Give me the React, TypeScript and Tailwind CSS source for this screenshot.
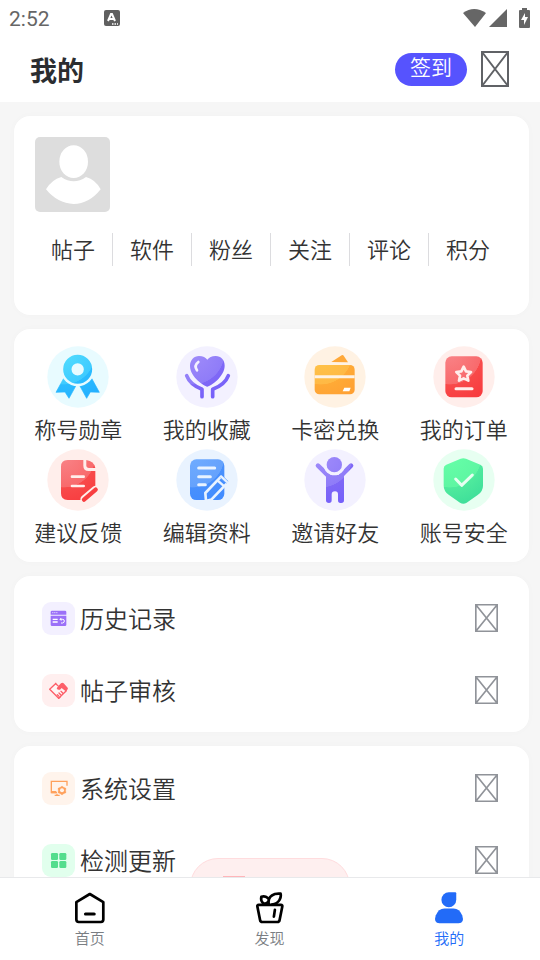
import { useState, type ReactNode } from "react";

type Tone = "cyan" | "purple" | "orange" | "red" | "blue" | "green";

const tones: Record<Tone, { bg: string; stops: [string, string, string, string] }> = {
  cyan: { bg: "#e8fbff", stops: ["#52defe", "#3fcbff", "#2bbcff", "#24b0ff"] },
  purple: { bg: "#f3f1ff", stops: ["#a08cfa", "#8f7cf8", "#7f68f6", "#7560fa"] },
  orange: { bg: "#fff2e3", stops: ["#ffc648", "#ffb945", "#ffaa36", "#ffa033"] },
  red: { bg: "#ffeeeb", stops: ["#f98488", "#f86a6c", "#f84a4a", "#f83c3f"] },
  blue: { bg: "#e9f3ff", stops: ["#70acff", "#65a2fc", "#4890fd", "#428cff"] },
  green: { bg: "#e7fff1", stops: ["#66ffa8", "#5ef6a2", "#4fea9d", "#3fdf9a"] },
};

const RoundIcon = ({ id, tone, children }: { id: string; tone: Tone; children: (fill: string, bg: string) => ReactNode }) => {
  const { bg, stops } = tones[tone];
  return (
    <svg viewBox="0 0 186 186" className="size-[62px]" aria-hidden="true">
      <defs>
        {/* the hard step in the middle gives the glossy edge */}
        <radialGradient id={id} gradientUnits="userSpaceOnUse" cx="50" cy="20" r="150">
          <stop offset="0" stopColor={stops[0]} />
          <stop offset="0.63" stopColor={stops[1]} />
          <stop offset="0.64" stopColor={stops[2]} />
          <stop offset="1" stopColor={stops[3]} />
        </radialGradient>
      </defs>
      <circle cx="93" cy="93" r="92" fill={bg} />
      {children(`url(#${id})`, bg)}
    </svg>
  );
};

const shortcuts: { label: string; tone: Tone; draw: (fill: string, bg: string) => ReactNode }[] = [
  {
    label: "称号勋章",
    tone: "cyan",
    draw: (fill, bg) => (
      <>
        <path d="M50 97 27 139 54 138 66 157 88 117ZM134 97 157 139 130 138 119 157 97 117Z" fill={fill} stroke={fill} strokeWidth="2" strokeLinejoin="round" />
        <circle cx="92" cy="70" r="51" fill={bg} />
        <circle cx="92" cy="70" r="31" fill="none" stroke={fill} strokeWidth="25" />
      </>
    ),
  },
  {
    label: "我的收藏",
    tone: "purple",
    draw: (fill) => (
      <>
        <path d="M94 122C84 120 42 93 42 60C42 42 54 30 69 30C81 30 89 35 94 41C99 35 107 30 119 30C135 30 146 42 146 59C146 92 104 120 94 122Z" fill={fill} />
        <path d="M67 48Q53 58 63 73" fill="none" stroke="#f3f1ff" strokeWidth="8" strokeLinecap="round" />
        <path d="M32 89Q42 116 78 130V152M157 89Q147 116 110 130V152" fill="none" stroke={fill} strokeWidth="11" strokeLinecap="round" strokeLinejoin="round" />
      </>
    ),
  },
  {
    label: "卡密兑换",
    tone: "orange",
    draw: (fill, bg) => (
      <>
        <path d="M82 48 113 28Q117 26 119 29L132 49Z" fill="#ffa838" />
        <rect x="32" y="57" width="120" height="88" rx="14" fill={fill} />
        <path d="M32 88H152V97H32Z" fill={bg} />
        <path d="M121 125H140L136 136H116Z" fill="#fff" />
      </>
    ),
  },
  {
    label: "我的订单",
    tone: "red",
    draw: (fill, bg) => (
      <>
        <rect x="37" y="31" width="112" height="123" rx="19" fill={fill} />
        <path d="M92 62 99 76 114 78 103 89 106 104 92 97 78 104 81 89 70 78 85 76Z" fill="none" stroke={bg} strokeWidth="8" strokeLinejoin="round" />
        <path d="M69 128H117" stroke={bg} strokeWidth="9" strokeLinecap="round" />
      </>
    ),
  },
  {
    label: "建议反馈",
    tone: "red",
    draw: (fill, bg) => (
      <>
        <path d="M62 33H109V50Q109 66 125 66H145V113L104 153H62Q42 153 42 133V53Q42 33 62 33Z" fill={fill} />
        <path d="M118 33Q141 36 145 57H126Q118 57 118 49Z" fill={fill} />
        <path d="M75 83H110M75 111H110" stroke={bg} strokeWidth="8" strokeLinecap="round" />
        <path d="M146 123 113 151" stroke={bg} strokeWidth="26" strokeLinecap="round" />
        <path d="M146 122 111 152" stroke={fill} strokeWidth="13" strokeLinecap="round" />
      </>
    ),
  },
  {
    label: "编辑资料",
    tone: "blue",
    draw: (fill, bg) => (
      <>
        <rect x="42" y="31" width="103" height="122" rx="19" fill={fill} />
        <path d="M68 57H116M68 83H103M68 107H88" stroke={bg} strokeWidth="9" strokeLinecap="round" />
        <path d="M135 83 155 101 106 152 90 156 88 132Z" fill={fill} stroke={bg} strokeWidth="8" strokeLinejoin="round" />
        <path d="M123 93 145 112" stroke={bg} strokeWidth="7" />
        <path d="M136 83 154 100" stroke={fill} strokeWidth="9" />
        <path d="M136 83 153 99" stroke={bg} strokeWidth="7" strokeLinecap="round" />
      </>
    ),
  },
  {
    label: "邀请好友",
    tone: "purple",
    draw: (fill, bg) => (
      <>
        <path d="M42 50 74 81M141 50 110 81" stroke={fill} strokeWidth="14" strokeLinecap="round" />
        <path d="M66 80Q92 74 120 80V154Q120 162 112 162H109Q102 162 102 154V136Q102 127 93 127Q83 127 83 136V154Q83 162 75 162Q66 162 66 154Z" fill={fill} />
        <circle cx="91" cy="47" r="32" fill={bg} />
        <circle cx="91" cy="47" r="23" fill={fill} />
      </>
    ),
  },
  {
    label: "账号安全",
    tone: "green",
    draw: (fill, bg) => (
      <>
        <path d="M83 29Q91 26 99 29L142 47Q150 50 150 59V110Q150 127 134 138L101 161Q91 167 81 161L48 138Q32 127 32 110V59Q32 50 40 47Z" fill={fill} />
        <path d="M68 90 86 109 118 78" fill="none" stroke={bg} strokeWidth="9" strokeLinecap="round" strokeLinejoin="round" />
      </>
    ),
  },
];

const stats = ["帖子", "软件", "粉丝", "关注", "评论", "积分"];

const menuGroups: { label: string; bg: string; icon: ReactNode }[][] = [
  [
    {
      label: "历史记录",
      bg: "bg-[#f3f0ff]",
      icon: (
        <g fill="#9b70f8">
          <path d="M30 26H69Q73 26 73 30V38H26V30Q26 26 30 26Z" />
          <path d="M26 41H73V68Q73 72 69 72H30Q26 72 26 68Z" />
          <path d="M31 32H34M37 32H40M43 32H46" stroke="#f3f0ff" strokeWidth="3" />
          <path d="M32 52H47M32 60H47" stroke="#fff" strokeWidth="4" />
          <path d="M54 52H62Q67 52 67 57T62 63H57M58 48 54 52 58 56" fill="none" stroke="#fff" strokeWidth="3" />
        </g>
      ),
    },
    {
      label: "帖子审核",
      bg: "bg-[#ffefef]",
      icon: (
        <>
          <path d="M23 46 42 26 53 38 44 46 52 51 59 45 73 59 50 73Z" fill="#fff5f5" />
          <path d="M43 27 23 46 50 73 55 69M39 28 49 36" fill="none" stroke="#fd5e68" strokeWidth="4" strokeLinejoin="round" />
          <path d="M49 36 57 28Q61 24 65 28L77 41Q79 44 76 47L71 52 59 42 54 47Q47 49 44 43Z" fill="#fd5e68" />
          <path d="M46 62 50 66M51 57 56 62M57 52 62 57M50 73 73 50" fill="none" stroke="#fd5e68" strokeWidth="4" strokeLinecap="round" />
        </>
      ),
    },
  ],
  [
    {
      label: "系统设置",
      bg: "bg-[#fff4ec]",
      icon: (
        <g fill="none" stroke="#ffa15c" strokeWidth="4">
          <path d="M75 41V28H28V62H45" />
          <path d="M28 57H43V64H28Z" fill="#ffa15c" stroke="none" />
          <path d="M38 70H53M45 65V70" />
          <path d="M60 42 65 46 72 49 71 56 72 62 65 65 60 69 55 65 48 62 49 56 48 49 55 46Z" fill="#ffa15c" strokeWidth="1" />
          <circle cx="60" cy="55" r="6" fill="#fff4ec" stroke="none" />
        </g>
      ),
    },
    {
      label: "检测更新",
      bg: "bg-[#e1ffed]",
      icon: (
        <g fill="#54dd8d">
          <rect x="27" y="27" width="21" height="21" rx="4" />
          <rect x="52" y="27" width="21" height="21" rx="4" />
          <rect x="27" y="51" width="21" height="21" rx="4" />
          <rect x="52" y="51" width="21" height="21" rx="4" />
        </g>
      ),
    },
  ],
];

const tabs = [
  {
    label: "首页",
    icon: (
      <g fill="none" stroke="currentColor" strokeWidth="8" strokeLinecap="round" strokeLinejoin="round">
        <path d="M46 6 86 30V82Q86 89 79 89H13Q6 89 6 82V30Z" />
        <path d="M33 65H59" strokeWidth="9" />
      </g>
    ),
  },
  {
    label: "发现",
    icon: (
      <g fill="none" stroke="currentColor" strokeWidth="8" strokeLinecap="round" strokeLinejoin="round">
        <path d="M13 38H79Q84 38 83 43L75 83Q74 89 68 89H24Q18 89 17 83L9 43Q8 38 13 38Z" />
        <path d="M43 37Q38 14 61 6Q69 4 78 5Q80 14 75 23Q69 35 52 37" />
        <path d="M40 18Q31 10 21 14Q18 24 25 32Q33 38 40 30" />
        <path d="M61 53 58 73" />
      </g>
    ),
  },
  {
    label: "我的",
    icon: (
      <g fill="currentColor">
        <path d="M46 1H65Q68 1 68 4V23A22 22 0 1 1 46 1Z" />
        <path d="M33 49H60Q78 49 86 70Q93 93 75 93H18Q0 93 7 70Q15 49 33 49Z" />
      </g>
    ),
  },
];

const CrossedBox = ({ className }: { className: string }) => (
  <svg viewBox="0 0 28 36" preserveAspectRatio="none" className={className} aria-hidden="true">
    <path d="M1 1H27V35H1ZM1 1 27 35M27 1 1 35" fill="none" stroke="currentColor" strokeWidth="2" />
  </svg>
);

const StatusBar = () => (
  <div className="flex h-9 shrink-0 items-center bg-white pl-[9px] pr-1.5 text-[#666]">
    <span className="pt-0.5 font-[Roboto] text-[21px] font-normal leading-6">2:52</span>
    <span className="ml-[54px] flex size-4 items-center justify-center rounded-xs bg-[#606060]">
      <svg viewBox="0 0 16 16" className="size-4" aria-hidden="true">
        <path d="M4 11 7 4H8L11 11M5 9H10" fill="none" stroke="#fff" strokeWidth="2" />
        <path d="M8 14H14" stroke="#fff" strokeWidth="1.5" strokeDasharray="1.5 1" />
      </svg>
    </span>
    <div className="ml-auto flex items-center">
      <svg viewBox="0 0 23 20" className="h-5 w-[23px]" fill="currentColor" aria-hidden="true">
        <path d="M0 5Q11 -3 23 5L12 19Z" />
      </svg>
      <svg viewBox="0 0 18 20" className="ml-[3px] h-5 w-[18px]" fill="currentColor" aria-hidden="true">
        <path d="M18 1V19H0Z" />
      </svg>
      <svg viewBox="0 0 12 20" className="ml-3 mr-[3px] h-5 w-3" aria-hidden="true">
        <path d="M3 0H8V2H10Q11 2 11 3V19Q11 20 10 20H1Q0 20 0 19V3Q0 2 1 2H3Z" fill="currentColor" />
        <path d="M6 5V9H9L5 17V12H2Z" fill="#fff" />
      </svg>
    </div>
  </div>
);

const App = () => {
  const [activeTab, setActiveTab] = useState("我的");

  return (
    <div className="flex h-screen flex-col bg-[#f6f6f6] font-['Noto_Sans_CJK_SC',sans-serif] font-[350] text-[#333]">
      <StatusBar />
      <header className="flex h-[66px] shrink-0 items-center bg-white pl-[30px] pr-[31px]">
        <h1 className="pt-0.5 text-[27px] font-bold leading-9 text-[#2b2d30]">我的</h1>
        <button type="button" className="ml-auto h-[33px] w-[72px] rounded-full bg-[#5653fe] pb-1.5 text-[21px] leading-[27px] text-white">
          签到
        </button>
        <button type="button" aria-label="设置" className="ml-3.5 text-[#606266]">
          <CrossedBox className="h-9 w-7" />
        </button>
      </header>

      <main className="relative flex min-h-0 flex-1 flex-col gap-3.5 overflow-hidden pb-4 pl-3.5 pr-[11px] pt-3.5">
        {/* Profile */}
        <section className="h-[199px] shrink-0 rounded-2xl bg-white pl-5 pr-[22px] pt-[21px] shadow-[0_0_8px_rgba(0,0,0,0.02)]">
          <svg viewBox="0 0 225 225" className="ml-px size-[75px] rounded-[5px] bg-[#ddd]" role="img" aria-label="头像">
            <ellipse cx="116" cy="74" rx="43" ry="49" fill="#fff" />
            <path d="M79 120Q116 146 153 120Q182 128 197 157Q162 201 116 201Q67 199 33 157Q50 128 79 120Z" fill="#fff" />
          </svg>
          <ul className="mt-[21px] flex divide-x divide-[#dcdcdf]">
            {stats.map((name) => (
              <li key={name} className="flex-1 pb-0.5 text-center text-[22px] leading-[31px]">
                {name}
              </li>
            ))}
          </ul>
        </section>

        {/* Shortcuts */}
        <section className="grid shrink-0 grid-cols-4 gap-y-[5px] rounded-2xl bg-white pb-[15px] pr-px pt-[17px] shadow-[0_0_8px_rgba(0,0,0,0.02)]">
          {shortcuts.map((item, i) => (
            <button key={item.label} type="button" className="flex flex-col items-center gap-1 text-[22px] leading-8">
              <RoundIcon id={`shortcut-${i}`} tone={item.tone}>
                {item.draw}
              </RoundIcon>
              <span>{item.label}</span>
            </button>
          ))}
        </section>

        {/* Menus */}
        {menuGroups.map((group, i) => (
          <section key={i} className="shrink-0 rounded-2xl bg-white py-1.5 shadow-[0_0_8px_rgba(0,0,0,0.02)]">
            {group.map((item) => (
              <button key={item.label} type="button" className="flex h-[72px] w-full items-center pl-7 pr-[31px]">
                <span className={`size-[33px] overflow-hidden rounded-[9px] ${item.bg}`}>
                  <svg viewBox="0 0 99 99" className="size-[33px]" aria-hidden="true">
                    {item.icon}
                  </svg>
                </span>
                <span className="ml-[5px] text-2xl">{item.label}</span>
                <CrossedBox className="ml-auto h-7 w-[23px] text-[#909399]" />
              </button>
            ))}
          </section>
        ))}

        {/* Floating button, half hidden by the tab bar */}
        <button
          type="button"
          aria-label="退出登录"
          className="absolute -bottom-[37px] left-1/2 h-14 w-40 -translate-x-1/2 rounded-full border border-[#ffdcde] bg-[#feefef]"
        >
          <span className="absolute left-8 top-[17px] h-px w-[22px] bg-[#ffb5b9]" />
        </button>
      </main>

      <nav className="flex h-[83px] shrink-0 border-t border-[#e8e9eb] bg-white pr-px">
        {tabs.map((tab) => {
          const active = tab.label === activeTab;
          return (
            <button
              key={tab.label}
              type="button"
              onClick={() => setActiveTab(tab.label)}
              className="flex flex-1 flex-col items-center pt-3.5"
            >
              <svg viewBox="0 0 93 95" className={`size-8 ${active ? "text-[#226bf8]" : "text-black"}`} aria-hidden="true">
                {tab.icon}
              </svg>
              <span className={`mt-[3px] text-[15px] leading-[22px] ${active ? "text-[#226bf8]" : "text-[#7a7e83]"}`}>{tab.label}</span>
            </button>
          );
        })}
      </nav>
    </div>
  );
};

export default App;
